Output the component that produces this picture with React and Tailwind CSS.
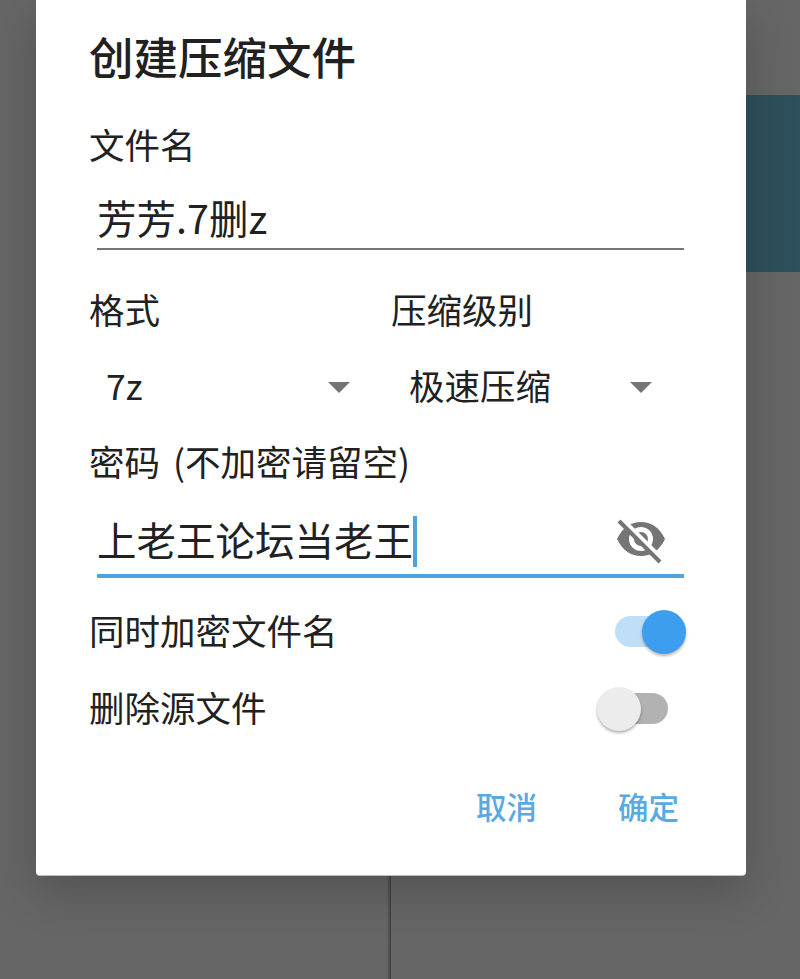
const font = { fontFamily: '"Noto Sans CJK SC", sans-serif' };

function Toggle({ on }) {
    return (
        <div className="relative h-[44px] w-[89px]">
            <div className={`absolute left-[18px] top-[6px] h-[31px] w-[53px] rounded-full ${on ? 'bg-[#bfdff8]' : 'bg-[#b2b2b2]'}`} />
            <div
                className={`absolute top-0 h-[44px] w-[44px] rounded-full shadow-[0_2px_3px_rgba(0,0,0,0.3)] ${on ? 'left-[45px] bg-[#3d9ef0]' : 'left-0 bg-[#ececec]'}`}
            />
        </div>
    );
}

function Arrow() {
    return (
        <svg width="22" height="11" viewBox="0 0 22 11" className="shrink-0">
            <path d="M0 0H22L11 11Z" fill="#757575" />
        </svg>
    );
}

function EyeOff() {
    return (
        <svg width="50" height="48" viewBox="0 0 50 48" className="shrink-0">
            <path d="M0 22C6 10 14 5 24 5C34 5 42 10 48 22C42 34 34 39 24 39C14 39 6 34 0 22Z" fill="#757575" />
            <circle cx="24" cy="22" r="12" fill="#fff" />
            <circle cx="24" cy="22" r="7" fill="#757575" />
            <path d="M5 3L46 44" stroke="#fff" strokeWidth="6" />
            <path d="M2 4L43 45" stroke="#757575" strokeWidth="4" />
        </svg>
    );
}

export default function App() {
    return (
        <div className="flex h-[979px] w-[800px] flex-col overflow-hidden bg-[#666666] text-[#212121]" style={font}>
            <div className="flex h-[876px] shrink-0">
                <div className="w-[36px] shrink-0" />

                <div className="relative z-10 flex w-[710px] shrink-0 flex-col rounded-b-[4px] border-b border-[#bdbdbd] bg-white pl-[53px] pr-[60px] shadow-[0_16px_50px_rgba(0,0,0,0.2)]">
                    <div className="mt-[30px] flex h-[56px] items-center pb-[4px] text-[44.5px] font-medium leading-none">创建压缩文件</div>

                    <div className="mt-[38px] flex h-[44px] items-center pb-[4px] text-[35.5px] leading-none">文件名</div>
                    <div className="ml-[8px] mr-[2px] mt-[22px] flex h-[60px] items-center border-b-2 border-[#757575] pb-[4px] text-[39.5px] leading-none">
                        芳芳.7删z
                    </div>

                    <div className="mt-[39px] grid h-[44px] grid-cols-[302px_1fr] items-center pb-[4px] text-[35.5px] leading-none">
                        <div>格式</div>
                        <div>压缩级别</div>
                    </div>
                    <div className="mt-[26px] grid h-[56px] grid-cols-[302px_1fr] items-center text-[35.5px] leading-none">
                        <div className="flex items-center justify-between pl-[17px] pr-[41px]">
                            <span className="mb-[5px]">7z</span>
                            <Arrow />
                        </div>
                        <div className="flex items-center justify-between pl-[18px] pr-[34px]">
                            <span className="mb-[5px]">极速压缩</span>
                            <Arrow />
                        </div>
                    </div>

                    <div className="mt-[26px] flex h-[44px] items-center pb-[4px] text-[35.5px] leading-none">
                        <span>密码</span>
                        <span className="ml-[13px]">(不加密请留空)</span>
                    </div>
                    <div className="ml-[8px] mr-[2px] mt-[23px] flex h-[70px] items-center justify-between border-b-4 border-[#4fa3e0] pr-[17px]">
                        <div className="flex items-center text-[39.5px] leading-none">
                            <span className="mb-[5px]">上老王论坛当老王</span>
                            <span className="h-[51px] w-[4px] bg-[#4fa3e0]" />
                        </div>
                        <EyeOff />
                    </div>

                    <div className="mt-[26px] flex h-[56px] items-center justify-between text-[35.5px] leading-none">
                        <span className="mb-[5px]">同时加密文件名</span>
                        <Toggle on />
                    </div>
                    <div className="mt-[21px] flex h-[56px] items-center justify-between text-[35.5px] leading-none">
                        <span className="mb-[5px]">删除源文件</span>
                        <Toggle />
                    </div>

                    <div className="mt-[43px] flex h-[56px] items-center justify-end gap-[81px] pb-[4px] pr-[7px] text-[30.5px] font-medium leading-none text-[#5aa9e0]">
                        <span>取消</span>
                        <span>确定</span>
                    </div>
                </div>

                <div className="flex-1 pt-[95px]">
                    <div className="h-[177px] bg-[#2d505c]" />
                </div>
            </div>

            <div className="flex-1 pl-[387px]">
                <div className="h-full w-[4px] bg-linear-to-r from-transparent to-[#3f3f3f]" />
            </div>
        </div>
    );
}
